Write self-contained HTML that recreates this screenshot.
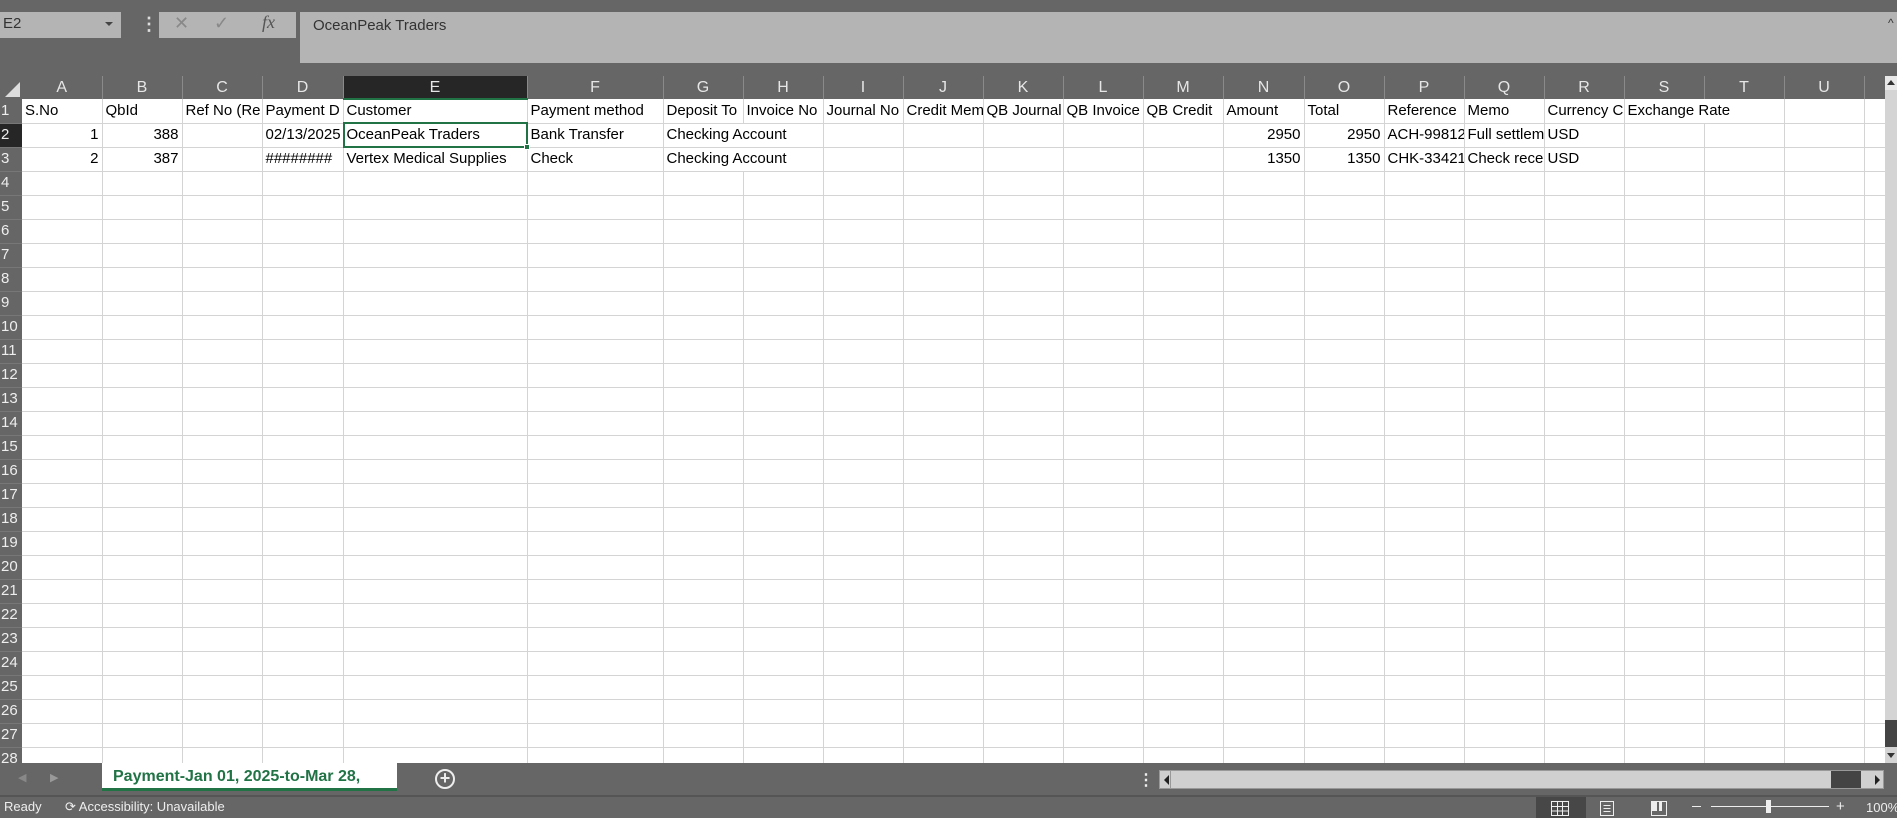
<!DOCTYPE html>
<html><head><meta charset="utf-8"><style>
*{margin:0;padding:0;box-sizing:border-box}
body{width:1897px;height:818px;background:#666;font-family:"Liberation Sans",sans-serif;position:relative;overflow:hidden}
.a{position:absolute}
table{border-collapse:collapse;table-layout:fixed;position:absolute;left:0;top:76px;width:1885px}
td{height:24px;border-right:1px solid #d4d4d4;border-bottom:1px solid #d4d4d4;background:#fff;font-size:15px;color:#000;white-space:nowrap;overflow:hidden;padding:0 3px;line-height:22px}
tr.h td{height:23px;background:#666;color:#e6e6e6;text-align:center;font-size:16px;border-right:1px solid #8a8a8a;border-bottom:none;line-height:21px}
td.rh{background:#666;color:#eee;border-right:none;border-bottom:1px solid #777;padding:0 0 0 1px;font-size:15px;text-align:left}
td.r{text-align:right}
</style></head><body>
<div class="a" style="left:0;top:12px;width:121px;height:26px;background:#b4b4b4;font-size:15px;color:#333;padding:3px 3px">E2</div>
<div class="a" style="left:105px;top:22px;border-left:4px solid transparent;border-right:4px solid transparent;border-top:4px solid #444"></div>
<div class="a" style="left:140px;top:14px;width:4px;color:#ddd;font-size:18px;font-weight:bold">⋮</div>
<div class="a" style="left:159px;top:12px;width:137px;height:26px;background:#b4b4b4;color:#888;font-size:18px">
<span class="a" style="left:15px;top:1px">✕</span><span class="a" style="left:55px;top:1px">✓</span><span class="a" style="left:103px;top:0px;font-family:'Liberation Serif';font-style:italic;color:#555">fx</span></div>
<div class="a" style="left:300px;top:12px;width:1597px;height:51px;background:#b4b4b4;font-size:15px;color:#333;padding:5px 13px">OceanPeak Traders</div>
<div class="a" style="left:1888px;top:16px;color:#333;font-size:12px">^</div>
<table>
<colgroup><col style="width:22px"><col style="width:80px"><col style="width:80px"><col style="width:80px"><col style="width:81px"><col style="width:184px"><col style="width:136px"><col style="width:80px"><col style="width:80px"><col style="width:80px"><col style="width:80px"><col style="width:80px"><col style="width:80px"><col style="width:80px"><col style="width:81px"><col style="width:80px"><col style="width:80px"><col style="width:80px"><col style="width:80px"><col style="width:80px"><col style="width:80px"><col style="width:80px"><col style="width:21px"></colgroup>
<tr class="h"><td style="border-right:none;position:relative"><svg class="a" style="left:3px;top:4px;display:block" width="18" height="18"><path d="M17 2V17H2Z" fill="#ddd"/></svg></td><td>A</td><td>B</td><td>C</td><td>D</td><td style="background:#262626;border-bottom:2px solid #217346">E</td><td>F</td><td>G</td><td>H</td><td>I</td><td>J</td><td>K</td><td>L</td><td>M</td><td>N</td><td>O</td><td>P</td><td>Q</td><td>R</td><td>S</td><td>T</td><td>U</td><td style="border-right:none"></td></tr>
<tr><td class="rh">1</td><td>S.No</td><td>QbId</td><td>Ref No (Re</td><td>Payment D</td><td>Customer</td><td>Payment method</td><td>Deposit To</td><td>Invoice No</td><td>Journal No</td><td>Credit Mem</td><td>QB Journal</td><td>QB Invoice</td><td>QB Credit</td><td>Amount</td><td>Total</td><td>Reference</td><td>Memo</td><td>Currency C</td><td style="overflow:visible;position:relative;z-index:2;border-right:none">Exchange Rate</td><td></td><td></td><td style="border-right:none"></td></tr>
<tr><td class="rh" style="background:#262626">2</td><td class="r">1</td><td class="r">388</td><td></td><td>02/13/2025</td><td>OceanPeak Traders</td><td>Bank Transfer</td><td style="overflow:visible;position:relative;z-index:2;border-right:none">Checking Account</td><td></td><td></td><td></td><td></td><td></td><td></td><td class="r">2950</td><td class="r">2950</td><td>ACH-99812</td><td>Full settlement</td><td>USD</td><td></td><td></td><td></td><td style="border-right:none"></td></tr>
<tr><td class="rh">3</td><td class="r">2</td><td class="r">387</td><td></td><td>########</td><td>Vertex Medical Supplies</td><td>Check</td><td style="overflow:visible;position:relative;z-index:2;border-right:none">Checking Account</td><td></td><td></td><td></td><td></td><td></td><td></td><td class="r">1350</td><td class="r">1350</td><td>CHK-33421</td><td>Check received</td><td>USD</td><td></td><td></td><td></td><td style="border-right:none"></td></tr>
<tbody id="rest"></tbody>
</table>
<script>
var s='';for(var i=4;i<=28;i++){s+='<tr><td class="rh">'+i+'</td>';for(var j=0;j<21;j++)s+='<td></td>';s+='<td style="border-right:none"></td></tr>';}
document.getElementById('rest').innerHTML=s;
</script>
<div class="a" style="left:343px;top:122px;width:185px;height:26px;border:2px solid #217346"></div>
<div class="a" style="left:524px;top:144px;width:6px;height:6px;background:#217346;border:1px solid #fff"></div>
<!-- vertical scrollbar -->
<div class="a" style="left:1885px;top:76px;width:12px;height:687px;background:#d4d4d4"></div>
<div class="a" style="left:1885px;top:76px;width:12px;height:14px;background:#e8e8e8"></div>
<div class="a" style="left:1887px;top:80px;border-left:4px solid transparent;border-right:4px solid transparent;border-bottom:5px solid #333"></div>
<div class="a" style="left:1885px;top:720px;width:12px;height:27px;background:#444"></div>
<div class="a" style="left:1887px;top:753px;border-left:4px solid transparent;border-right:4px solid transparent;border-top:5px solid #333"></div>
<!-- sheet tabs -->
<div class="a" style="left:0;top:763px;width:1897px;height:32px;background:#666"></div>
<div class="a" style="left:18px;top:771px;color:#888;font-size:11px">◀</div>
<div class="a" style="left:50px;top:771px;color:#999;font-size:11px">▶</div>
<div class="a" style="left:102px;top:763px;width:295px;height:28px;background:#fff;border-bottom:3px solid #217346;color:#217346;font-weight:bold;font-size:16px;padding:5px 11px;white-space:nowrap">Payment-Jan 01, 2025-to-Mar 28,</div>
<div class="a" style="left:435px;top:769px;width:20px;height:20px;border:2px solid #eee;border-radius:50%;color:#eee;font-size:18px;line-height:15px;text-align:center;font-weight:bold">+</div>
<div class="a" style="left:1138px;top:770px;color:#eee;font-size:16px;font-weight:bold">⋮</div>
<div class="a" style="left:1159px;top:770px;width:725px;height:19px;background:#d0d0d0;border:1px solid #999"></div>
<div class="a" style="left:1164px;top:775px;border-top:5px solid transparent;border-bottom:5px solid transparent;border-right:5px solid #222"></div>
<div class="a" style="left:1170px;top:771px;width:1px;height:17px;background:#999"></div>
<div class="a" style="left:1831px;top:771px;width:30px;height:17px;background:#444"></div>
<div class="a" style="left:1875px;top:775px;border-top:5px solid transparent;border-bottom:5px solid transparent;border-left:5px solid #222"></div>
<!-- status -->
<div class="a" style="left:0;top:795px;width:1897px;height:2px;background:#555"></div>
<div class="a" style="left:4px;top:799px;color:#eee;font-size:13px">Ready</div>
<div class="a" style="left:65px;top:799px;color:#eee;font-size:13px">⟳ Accessibility: Unavailable</div>
<div class="a" style="left:1536px;top:797px;width:50px;height:21px;background:#474747"></div>
<svg class="a" style="left:1551px;top:801px" width="18" height="15"><path d="M0.5 0.5H17.5V14.5H0.5ZM6.5 0.5V14.5M11.5 0.5V14.5M0.5 5.5H17.5M0.5 10H17.5" stroke="#eee" fill="none"/></svg>
<svg class="a" style="left:1600px;top:801px" width="14" height="15"><path d="M0.5 0.5H13.5V14.5H0.5ZM3.5 4.5H10.5M3.5 7.5H10.5M3.5 10.5H10.5" stroke="#eee" fill="none"/></svg>
<svg class="a" style="left:1651px;top:801px" width="16" height="15"><path d="M0.5 0.5H15.5V14.5H0.5Z" stroke="#eee" fill="none"/><rect x="1" y="1" width="5" height="9" fill="#eee"/><rect x="8" y="1" width="3" height="9" fill="#eee"/></svg>
<div class="a" style="left:1692px;top:806px;width:9px;height:1px;background:#eee"></div>
<div class="a" style="left:1711px;top:806px;width:118px;height:1px;background:#eee"></div>
<div class="a" style="left:1766px;top:800px;width:5px;height:13px;background:#eee"></div>
<div class="a" style="left:1836px;top:798px;color:#eee;font-size:15px">+</div>
<div class="a" style="left:1866px;top:800px;color:#eee;font-size:13px">100%</div>
</body></html>
